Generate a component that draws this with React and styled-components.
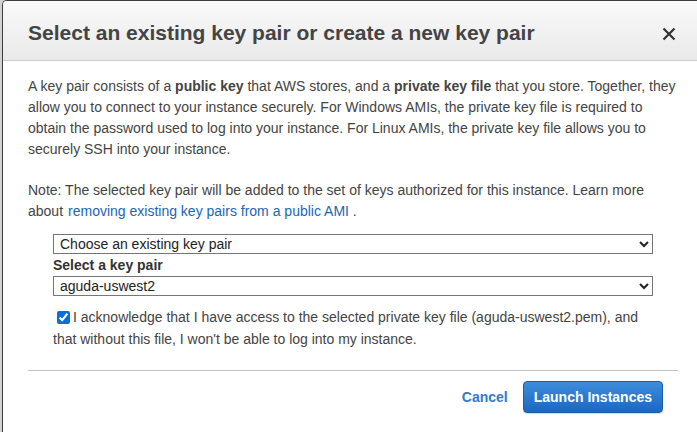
import React from "react";
import styled, { createGlobalStyle } from "styled-components";

const GlobalStyle = createGlobalStyle`
  body {
    margin: 0;
    background: #cfd3d6;
    font-family: "Liberation Sans", Arial, sans-serif;
    overflow: hidden;
  }
`;

const Modal = styled.div`
  margin-left: 2px;
  width: 720px;
  height: 432px;
  background: #fff;
  border-left: 1px solid #3c3c3c;
  border-top: 1px solid #3c3c3c;
  border-top-left-radius: 5px;
  box-sizing: border-box;
  overflow: hidden;
`;

const Header = styled.div`
  height: 60px;
  display: flex;
  align-items: center;
  padding: 0 25px;
  background: linear-gradient(to bottom, #fafafa, #e9e9e9);
  border-bottom: 1px solid #cdcdcd;
  width: 694px;
  box-sizing: border-box;
  justify-content: space-between;
`;

const Title = styled.h2`
  margin: 0;
  font-size: 21px;
  font-weight: bold;
  color: #444;
  padding-top: 5px;
`;

const Close = styled.button`
  border: none;
  background: none;
  padding: 0;
  width: 18px;
  height: 18px;
  display: flex;
  align-items: center;
  justify-content: center;
  margin: 6px -6px 0 0;
  cursor: pointer;
`;

const Body = styled.div`
  width: 650px;
  margin-left: 25px;
  padding-top: 15px;
  font-size: 14px;
  line-height: 21px;
  color: #444;
`;

const Para = styled.p`
  margin: 0 0 ${(p) => (p.$last ? 0 : 20)}px;
`;

const Link = styled.a`
  color: #1a66b8;
  text-decoration: none;
  margin-left: 5px;
`;

const Fields = styled.div`
  margin: 12px 0 0 25px;
  width: 600px;
  display: flex;
  flex-direction: column;
`;

const Select = styled.select`
  width: 600px;
  height: 20px;
  font-family: "Liberation Sans", Arial, sans-serif;
  font-size: 14px;
  color: #222;
  border: 1px solid #767676;
  border-radius: 0;
  padding: 0 0 0 2px;
  background: #fff;
  box-sizing: border-box;
`;

const Label = styled.label`
  font-weight: bold;
  color: #333;
  line-height: 22px;
`;

const Ack = styled.label`
  display: block;
  margin-top: 10px;
  line-height: 22px;
  color: #444;
`;

const Check = styled.input`
  accent-color: #0a6fd6;
  width: 13px;
  height: 13px;
  margin: 0 3px 0 4px;
  vertical-align: -2px;
`;

const Rule = styled.hr`
  border: none;
  border-top: 1px solid #c4c4c4;
  margin: 20px 0 10px;
  width: 650px;
`;

const Footer = styled.div`
  width: 635px;
  display: flex;
  justify-content: flex-end;
  align-items: center;
  gap: 15px;
`;

const Cancel = styled.a`
  color: #3579cf;
  font-weight: bold;
  font-size: 14px;
`;

const Primary = styled.button`
  height: 32px;
  padding: 0 10px;
  border: 1px solid #1a5fa6;
  border-radius: 4px;
  background: linear-gradient(to bottom, #3d8ddb, #1b67c2);
  color: #fff;
  font-family: "Liberation Sans", Arial, sans-serif;
  font-weight: bold;
  font-size: 14px;
  box-shadow: 0 1px 1px rgba(0, 0, 0, 0.15);
`;

export default function App() {
  return (
    <>
      <GlobalStyle />
      <Modal>
        <Header>
          <Title>Select an existing key pair or create a new key pair</Title>
          <Close aria-label="Close">
            <svg width="14" height="14" viewBox="0 0 14 14">
              <path d="M1.5 1.5 L12.5 12.5 M12.5 1.5 L1.5 12.5" stroke="#333" strokeWidth="2.2" />
            </svg>
          </Close>
        </Header>
        <Body>
          <Para>
            A key pair consists of a <b>public key</b> that AWS stores, and a <b>private key file</b> that
            you store. Together, they allow you to connect to your instance securely. For Windows AMIs,
            the private key file is required to obtain the password used to log into your instance. For
            Linux AMIs, the private key file allows you to securely SSH into your instance.
          </Para>
          <Para $last>
            Note: The selected key pair will be added to the set of keys authorized for this instance.
            Learn more about<Link href="#">removing existing key pairs from a public AMI</Link> .
          </Para>
          <Fields>
            <Select defaultValue="existing">
              <option value="existing">Choose an existing key pair</option>
              <option value="new">Create a new key pair</option>
            </Select>
            <Label>Select a key pair</Label>
            <Select defaultValue="aguda">
              <option value="aguda">aguda-uswest2</option>
            </Select>
            <Ack>
              <Check type="checkbox" defaultChecked />I acknowledge that I have access to the selected
              private key file (aguda-uswest2.pem), and that without this file, I won't be able to log
              into my instance.
            </Ack>
          </Fields>
          <Rule />
          <Footer>
            <Cancel>Cancel</Cancel>
            <Primary>Launch Instances</Primary>
          </Footer>
        </Body>
      </Modal>
    </>
  );
}
